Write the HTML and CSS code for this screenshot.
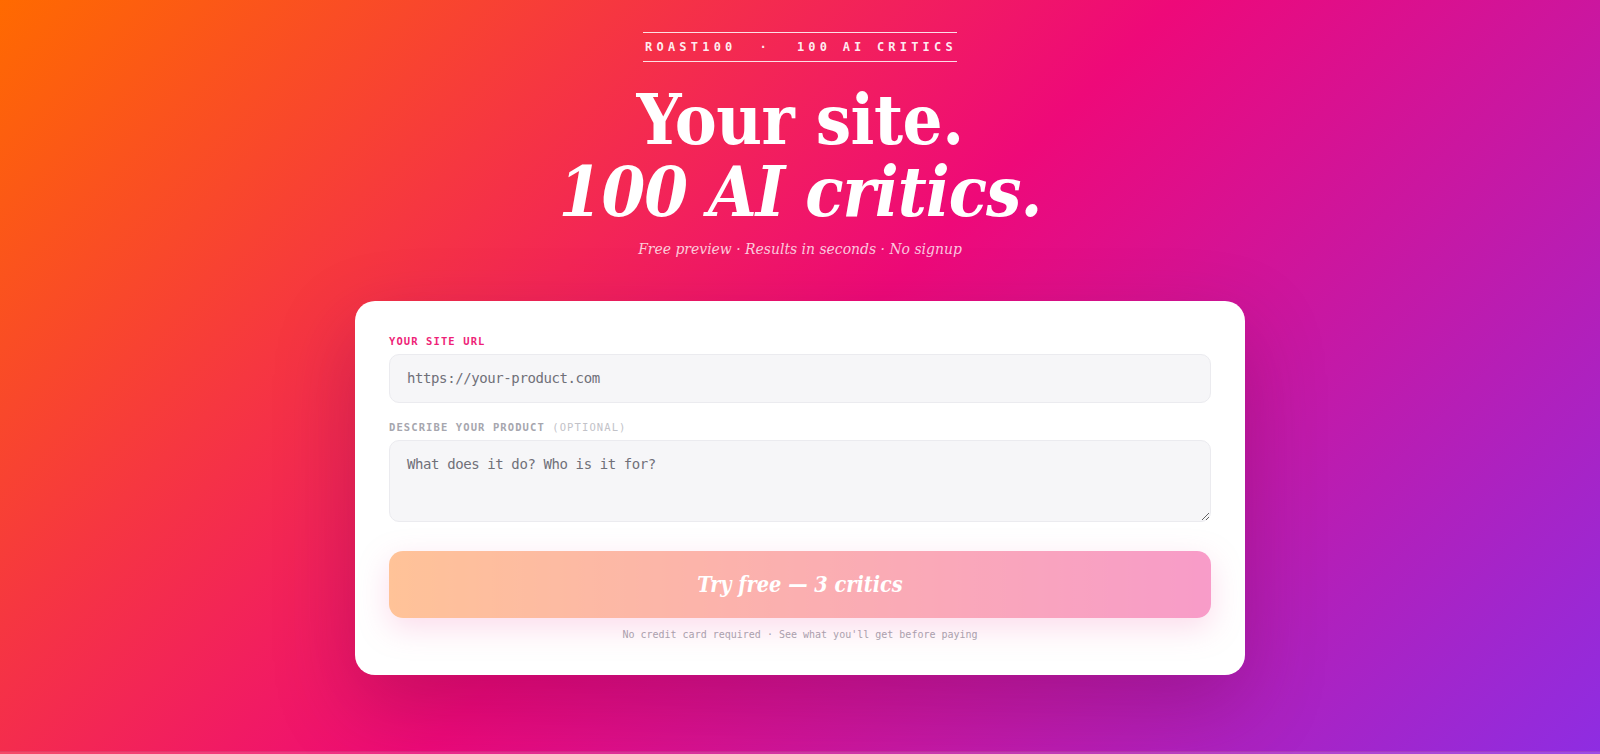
FILE: index.html
```html
<!DOCTYPE html>
<html lang="en">
<head>
    <meta charset="UTF-8">
    <meta name="viewport" content="width=device-width, initial-scale=1.0">
    <title>Roast100 — 100 AI critics</title>
    <link rel="stylesheet" href="styles.css">
</head>
<body>
    <main class="hero">
        <div class="eyebrow">ROAST100<span class="dot">·</span>100 AI CRITICS</div>

        <h1 class="headline">
            <span class="line">Your site.</span>
            <span class="line italic">100 AI critics.</span>
        </h1>
        <p class="tagline">Free preview · Results in seconds · No signup</p>

        <form class="card" id="roastForm">
            <label class="field-label accent" for="siteUrl">YOUR SITE URL</label>
            <input class="field" type="url" id="siteUrl" name="url" placeholder="https://your-product.com">

            <label class="field-label" for="siteDesc">DESCRIBE YOUR PRODUCT <span class="muted">(OPTIONAL)</span></label>
            <textarea class="field area" id="siteDesc" name="description" placeholder="What does it do? Who is it for?"></textarea>

            <button class="cta" type="submit" disabled>Try free — 3 critics</button>
            <p class="fineprint">No credit card required · See what you'll get before paying</p>
        </form>
    </main>
    <section class="next"></section>
</body>
</html>
```

FILE: styles.css
```css
body {
    margin: 0;
    font-family: "DejaVu Serif Condensed", "Liberation Serif", serif;
    color: #fff;
    background: linear-gradient(135deg, #ff6a00 0%, #ee0979 50%, #8e2de2 100%) fixed;
}

.hero {
    height: calc(100vh - 3px);
    box-sizing: border-box;
    padding-top: 32px;
    display: flex;
    flex-direction: column;
    align-items: center;
}

.next {
    height: 200px;
    background: rgba(255, 255, 255, 0.14);
    border-top: 1px solid rgba(120, 0, 60, 0.12);
}

.eyebrow {
    font-family: "DejaVu Sans Mono", monospace;
    font-size: 12px;
    line-height: 14px;
    font-weight: bold;
    letter-spacing: 4.2px;
    padding: 7px 0 7px 2px;
    color: rgba(255, 255, 255, 0.92);
    border-top: 1.5px solid rgba(255, 255, 255, 0.85);
    border-bottom: 1.5px solid rgba(255, 255, 255, 0.85);
}

.eyebrow .dot {
    margin: 0 26px 0 23px;
}

.headline {
    margin: 22px 0 0;
    font-size: 70px;
    line-height: 72px;
    font-weight: bold;
    letter-spacing: -0.5px;
    text-align: center;
}

.headline .line {
    display: block;
}

.headline .italic {
    font-style: italic;
    letter-spacing: -1px;
}

.tagline {
    margin: 10px 0 0;
    font-size: 15.5px;
    line-height: 22px;
    font-style: italic;
    color: rgba(255, 255, 255, 0.78);
}

.card {
    width: 890px;
    box-sizing: border-box;
    margin-top: 41px;
    padding: 34px;
    background: #fff;
    border-radius: 20px;
    display: flex;
    flex-direction: column;
    box-shadow: 0 30px 80px rgba(90, 0, 60, 0.28);
}

.field-label {
    font-family: "DejaVu Sans Mono", monospace;
    font-size: 10.5px;
    line-height: 12px;
    font-weight: bold;
    letter-spacing: 1.1px;
    color: #a6a6ae;
    margin-bottom: 7px;
}

.field-label.accent {
    color: #ee1f78;
}

.field-label .muted {
    font-weight: normal;
    color: #c2c2c8;
}

.field {
    display: block;
    font-family: "DejaVu Sans Mono", monospace;
    font-size: 14px;
    line-height: 17px;
    letter-spacing: -0.4px;
    color: #333;
    padding: 15px 17px;
    background: #f6f6f8;
    border: 1px solid #ebebef;
    border-radius: 10px;
    outline: none;
    margin: 0 0 18px;
}

.field::placeholder {
    color: #707078;
}

.area {
    height: 82px;
    box-sizing: border-box;
    resize: vertical;
    margin-bottom: 29px;
}

.cta {
    font-family: "DejaVu Serif Condensed", "Liberation Serif", serif;
    font-size: 21.5px;
    line-height: 30px;
    font-weight: bold;
    font-style: italic;
    color: #fff;
    padding: 18.5px;
    border: none;
    border-radius: 14px;
    background: linear-gradient(90deg, #ff6a00, #ee0979);
    box-shadow: 0 10px 30px rgba(238, 9, 121, 0.35);
    opacity: 0.4;
    cursor: pointer;
}

.fineprint {
    margin: 11px 0 0;
    font-family: "DejaVu Sans Mono", monospace;
    font-size: 10px;
    line-height: 12px;
    text-align: center;
    color: #a8a8b0;
}
```
